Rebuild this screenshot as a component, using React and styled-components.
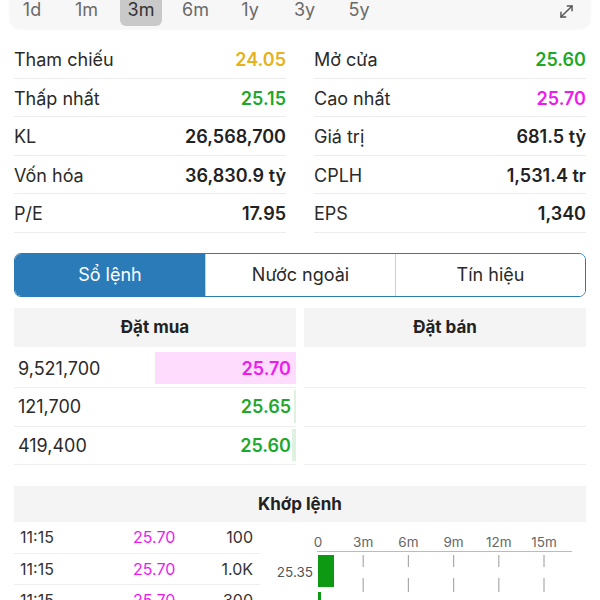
import styled, { createGlobalStyle } from 'styled-components';
import { MoveDiagonal } from 'lucide-react';

const Global = createGlobalStyle`
  body {
    margin: 0;
    background: #ffffff;
    font-family: Inter, "Noto Sans", sans-serif;
    color: #222;
    overflow: hidden;
  }
`;

const periods = ['1d', '1m', '3m', '6m', '1y', '3y', '5y'];

const stats = [
  ['Tham chiếu', '24.05', '#e5b21c', 'Mở cửa', '25.60', '#1ea82a'],
  ['Thấp nhất', '25.15', '#1ea82a', 'Cao nhất', '25.70', '#ee1aee'],
  ['KL', '26,568,700', '#222', 'Giá trị', '681.5 tỷ', '#222'],
  ['Vốn hóa', '36,830.9 tỷ', '#222', 'CPLH', '1,531.4 tr', '#222'],
  ['P/E', '17.95', '#222', 'EPS', '1,340', '#222'],
];

const bids = [
  { vol: '9,521,700', price: '25.70', color: '#ee1aee', bar: 141, barColor: '#fddcfd' },
  { vol: '121,700', price: '25.65', color: '#1ea82a', bar: 2, barColor: '#dff2df' },
  { vol: '419,400', price: '25.60', color: '#1ea82a', bar: 4, barColor: '#dff2df' },
];

const trades = [
  ['11:15', '25.70', '100'],
  ['11:15', '25.70', '1.0K'],
  ['11:15', '25.70', '300'],
];

export default function App() {
  return (
    <>
      <Global />
      <Page>
        <TopBar>
          <Periods>
            {periods.map((p) => (
              <Period key={p} $active={p === '3m'}>{p}</Period>
            ))}
          </Periods>
          <Expand>
            <MoveDiagonal size={19} strokeWidth={1.8} color="#555" />
          </Expand>
        </TopBar>

        <Stats>
          {stats.map((r) => [
            <StatCell key={r[0]}>
              <span>{r[0]}</span>
              <StatValue $color={r[2]}>{r[1]}</StatValue>
            </StatCell>,
            <StatCell key={r[3]}>
              <span>{r[3]}</span>
              <StatValue $color={r[5]}>{r[4]}</StatValue>
            </StatCell>,
          ])}
        </Stats>

        <Tabs>
          <Tab $active>Sổ lệnh</Tab>
          <Tab>Nước ngoài</Tab>
          <Tab>Tín hiệu</Tab>
        </Tabs>

        <Book>
          <Side>
            <SideHead>Đặt mua</SideHead>
            {bids.map((b) => (
              <BookRow key={b.vol}>
                <span>{b.vol}</span>
                <PriceCell>
                  <DepthBar style={{ width: b.bar, background: b.barColor }} />
                  <Price $color={b.color}>{b.price}</Price>
                </PriceCell>
              </BookRow>
            ))}
          </Side>
          <Side>
            <SideHead>Đặt bán</SideHead>
            <BookRow />
            <BookRow />
            <BookRow />
          </Side>
        </Book>

        <MatchHead>Khớp lệnh</MatchHead>
        <MatchBody>
          <Trades>
            {trades.map((t, i) => (
              <TradeRow key={i}>
                <span>{t[0]}</span>
                <TradePrice>{t[1]}</TradePrice>
                <TradeVol>{t[2]}</TradeVol>
              </TradeRow>
            ))}
          </Trades>
          <Chart>
            <svg width="326" height="80" viewBox="0 0 326 80">
              {['0', '3m', '6m', '9m', '12m', '15m'].map((l, i) => (
                <g key={l}>
                  <text x={58 + i * 45.2} y={25} textAnchor="middle" fontSize="13.5" fill="#666" fontFamily="Inter, sans-serif">{l}</text>
                  {i > 0 && (
                    <>
                      <line x1={58 + i * 45.2} x2={58 + i * 45.2} y1={33} y2={45} stroke="#aaa" strokeWidth="1.2" />
                      <line x1={58 + i * 45.2} x2={58 + i * 45.2} y1={56} y2={70} stroke="#aaa" strokeWidth="1.2" />
                    </>
                  )}
                </g>
              ))}
              <line x1="57" x2="312" y1="29.5" y2="29.5" stroke="#bbb" strokeWidth="1" />
              <rect x="58" y="33" width="16" height="32" fill="#0d9a12" />
              <rect x="58" y="70" width="3" height="12" fill="#0d9a12" />
              <text x="53" y="55" textAnchor="end" fontSize="13.5" fill="#555" fontFamily="Inter, sans-serif">25.35</text>
            </svg>
          </Chart>
        </MatchBody>
      </Page>
    </>
  );
}

const Page = styled.div`
  width: 600px;
  height: 600px;
  padding: 0 14px;
  box-sizing: border-box;
  overflow: hidden;
`;

const TopBar = styled.div`
  margin: -10px -4px 0;
  height: 38px;
  background: #f7f7f7;
  border-radius: 10px;
  box-shadow: 0 1px 3px rgba(0, 0, 0, 0.06);
  display: flex;
  justify-content: space-between;
  padding-left: 1px;
  padding-right: 14px;
`;

const Periods = styled.div`
  display: flex;
  gap: 12.5px;
`;

const Period = styled.div`
  width: 42px;
  height: 36px;
  box-sizing: border-box;
  padding-top: 9px;
  line-height: 22px;
  text-align: center;
  font-size: 18px;
  color: ${(p) => (p.$active ? '#333' : '#6a6a6a')};
  background: ${(p) => (p.$active ? '#c9c9c9' : 'transparent')};
  border-radius: 6px;
`;

const Expand = styled.div`
  display: flex;
  align-items: center;
  padding-top: 8px;
  height: 26px;
`;

const Stats = styled.div`
  margin-top: 12px;
  display: grid;
  grid-template-columns: 1fr 1fr;
  column-gap: 28px;
`;

const StatCell = styled.div`
  height: 38.5px;
  box-sizing: border-box;
  border-bottom: 1px solid #ececec;
  display: flex;
  justify-content: space-between;
  align-items: center;
  padding-top: 2px;
  font-size: 18px;
  color: #2a2a2a;
`;

const StatValue = styled.span`
  font-weight: 600;
  color: ${(p) => p.$color};
`;

const Tabs = styled.div`
  margin-top: 20px;
  height: 44px;
  box-sizing: border-box;
  border: 1.5px solid #2b7bb9;
  border-radius: 7px;
  overflow: hidden;
  display: grid;
  grid-template-columns: 1fr 1fr 1fr;
`;

const Tab = styled.div`
  display: flex;
  align-items: center;
  justify-content: center;
  font-size: 18px;
  color: ${(p) => (p.$active ? '#fff' : '#2a2a2a')};
  background: ${(p) => (p.$active ? '#2b7bb9' : '#fff')};
  & + & {
    border-left: 1px solid #cfcfcf;
  }
`;

const Book = styled.div`
  margin-top: 11px;
  display: grid;
  grid-template-columns: 1fr 1fr;
  column-gap: 8px;
`;

const Side = styled.div`
  display: flex;
  flex-direction: column;
`;

const SideHead = styled.div`
  height: 39px;
  margin-bottom: 3px;
  background: #f4f4f4;
  display: flex;
  align-items: center;
  justify-content: center;
  font-size: 17px;
  font-weight: 700;
  color: #222;
`;

const BookRow = styled.div`
  height: 38.5px;
  box-sizing: border-box;
  border-bottom: 1px solid #efefef;
  display: flex;
  align-items: center;
  justify-content: space-between;
  padding-left: 4px;
  font-size: 18px;
  color: #2a2a2a;
`;

const PriceCell = styled.div`
  position: relative;
  align-self: stretch;
  display: flex;
  align-items: center;
  justify-content: flex-end;
  width: 141px;
`;

const DepthBar = styled.div`
  position: absolute;
  right: 0;
  top: 2px;
  bottom: 3px;
`;

const Price = styled.span`
  position: relative;
  padding-right: 5px;
  font-weight: 600;
  color: ${(p) => p.$color};
`;

const MatchHead = styled.div`
  margin-top: 21px;
  height: 36px;
  background: #f4f4f4;
  display: flex;
  align-items: center;
  justify-content: center;
  font-size: 17px;
  font-weight: 700;
  color: #222;
`;

const MatchBody = styled.div`
  display: flex;
`;

const Trades = styled.div`
  width: 246px;
`;

const TradeRow = styled.div`
  height: 31.5px;
  box-sizing: border-box;
  border-bottom: 1px solid #efefef;
  display: grid;
  grid-template-columns: 113px 60px 1fr;
  align-items: center;
  padding: 0 7px 0 6px;
  font-size: 16px;
  color: #333;
`;

const TradePrice = styled.span`
  color: #ee1aee;
`;

const TradeVol = styled.span`
  text-align: right;
`;

const Chart = styled.div`
  width: 326px;
  height: 80px;
`;
